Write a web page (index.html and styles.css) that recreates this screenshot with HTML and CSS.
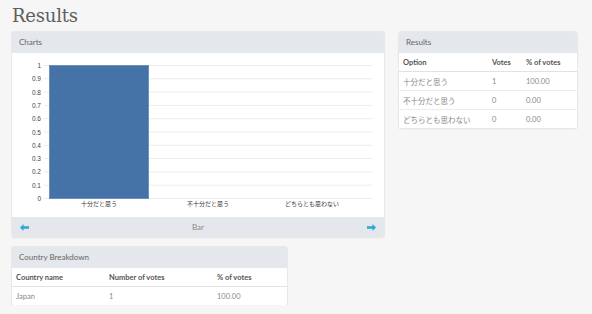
FILE: index.html
```html
<!DOCTYPE html>
<html>
<head>
<meta charset="utf-8">
<link rel="stylesheet" href="styles.css">
</head>
<body>
<div class="page">
  <h1 class="title">Results</h1>
  <div class="layout">
    <div class="col-left">
      <div class="panel charts">
        <div class="panel-head">Charts</div>
        <div class="chart-body">
          <svg class="chart" width="372" height="164" viewBox="0 0 372 164">
            <g class="grid">
              <line x1="32" y1="12.5" x2="360" y2="12.5"/>
              <line x1="32" y1="25.8" x2="360" y2="25.8"/>
              <line x1="32" y1="39.1" x2="360" y2="39.1"/>
              <line x1="32" y1="52.4" x2="360" y2="52.4"/>
              <line x1="32" y1="65.7" x2="360" y2="65.7"/>
              <line x1="32" y1="79" x2="360" y2="79"/>
              <line x1="32" y1="92.3" x2="360" y2="92.3"/>
              <line x1="32" y1="105.6" x2="360" y2="105.6"/>
              <line x1="32" y1="118.9" x2="360" y2="118.9"/>
              <line x1="32" y1="132.2" x2="360" y2="132.2"/>
              <line x1="32" y1="145.5" x2="360" y2="145.5"/>
            </g>
            <g class="ylabels">
              <text x="29" y="15">1</text>
              <text x="29" y="28.3">0.9</text>
              <text x="29" y="41.6">0.8</text>
              <text x="29" y="54.9">0.7</text>
              <text x="29" y="68.2">0.6</text>
              <text x="29" y="81.5">0.5</text>
              <text x="29" y="94.8">0.4</text>
              <text x="29" y="108.1">0.3</text>
              <text x="29" y="121.4">0.2</text>
              <text x="29" y="134.7">0.1</text>
              <text x="29" y="148">0</text>
            </g>
            <rect class="bar" x="37.5" y="12.5" width="99" height="133"/>
            <g class="xlabels">
              <text x="87" y="153">十分だと思う</text>
              <text x="196" y="153">不十分だと思う</text>
              <text x="300" y="153">どちらとも思わない</text>
            </g>
          </svg>
        </div>
        <div class="panel-foot">
          <svg class="arrow" width="9" height="7" viewBox="0 0 9 7"><path d="M0 3.5 L3.5 0 L3.5 2.3 L9 2.3 L9 4.7 L3.5 4.7 L3.5 7 Z"/></svg>
          <span class="foot-label">Bar</span>
          <svg class="arrow" width="9" height="7" viewBox="0 0 9 7"><path d="M9 3.5 L5.5 0 L5.5 2.3 L0 2.3 L0 4.7 L5.5 4.7 L5.5 7 Z"/></svg>
        </div>
      </div>
      <div class="panel country">
        <div class="panel-head">Country Breakdown</div>
        <table class="tbl">
          <thead>
            <tr><th class="c1">Country name</th><th class="c2">Number of votes</th><th>% of votes</th></tr>
          </thead>
          <tbody>
            <tr><td>Japan</td><td>1</td><td>100.00</td></tr>
          </tbody>
        </table>
      </div>
    </div>
    <div class="col-right">
      <div class="panel results">
        <div class="panel-head">Results</div>
        <table class="tbl">
          <thead>
            <tr><th class="r1">Option</th><th class="r2">Votes</th><th>% of votes</th></tr>
          </thead>
          <tbody>
            <tr><td>十分だと思う</td><td>1</td><td>100.00</td></tr>
            <tr><td>不十分だと思う</td><td>0</td><td>0.00</td></tr>
            <tr><td>どちらとも思わない</td><td>0</td><td>0.00</td></tr>
          </tbody>
        </table>
      </div>
    </div>
  </div>
</div>
</body>
</html>
```

FILE: styles.css
```css
html, body {
  margin: 0;
  padding: 0;
  background: #f6f6f6;
}
body {
  font-family: Lato, "Noto Sans CJK JP", sans-serif;
  font-size: 8px;
  color: #777;
}
.page {
  padding: 4px 12px 0 12px;
}
.title {
  margin: 0 0 5px 0;
  font-family: "DejaVu Serif", serif;
  font-weight: normal;
  font-size: 18px;
  line-height: 23px;
  color: #5e5e5e;
  letter-spacing: -0.2px;
}
.layout {
  display: flex;
  gap: 15px;
  align-items: flex-start;
}
.col-left {
  width: 372px;
  display: flex;
  flex-direction: column;
  gap: 10px;
}
.col-right {
  width: 178px;
}
.panel {
  background: #fff;
  border-radius: 2px;
  box-shadow: 0 0 0 1px #e8e8e8, 0 1px 2px rgba(0,0,0,0.08);
  overflow: hidden;
}
.panel-head {
  background: #e4e7eb;
  height: 21px;
  line-height: 21px;
  padding-left: 7px;
  color: #666;
  font-size: 8px;
}
.chart-body {
  height: 164px;
}
.chart {
  display: block;
}
.grid line {
  stroke: #ececec;
  stroke-width: 1;
}
.ylabels text {
  font-family: "Liberation Sans", Arial, sans-serif;
  font-size: 6.5px;
  fill: #444;
  text-anchor: end;
}
.xlabels text {
  font-family: "Noto Sans CJK JP", sans-serif;
  font-size: 6px;
  fill: #333;
  text-anchor: middle;
}
.bar {
  fill: #4572a7;
  stroke: #6d8fbb;
  stroke-width: 1;
}
.panel-foot {
  background: #e4e7eb;
  height: 20px;
  display: flex;
  align-items: center;
  justify-content: space-between;
  padding: 0 8px 0 8px;
}
.arrow {
  display: block;
  fill: #2fa4d9;
}
.foot-label {
  color: #888;
  font-size: 8px;
}
.country {
  width: 275px;
}
.tbl {
  width: 100%;
  border-collapse: collapse;
  font-family: Lato, "Noto Sans CJK JP", sans-serif;
  font-size: 7.5px;
}
.tbl th {
  text-align: left;
  font-weight: bold;
  color: #555;
  height: 18px;
  padding: 0 0 0 4px;
  border-bottom: 1px solid #e2e2e2;
}
.tbl td {
  text-align: left;
  color: #888;
  height: 18px;
  padding: 0 0 0 4px;
  border-top: 1px solid #ececec;
}
.tbl tbody tr:first-child td {
  border-top: none;
}
.country .c1 { width: 89px; }
.country .c2 { width: 104px; }
.results .r1 { width: 85px; }
.results .r2 { width: 30px; }
```
